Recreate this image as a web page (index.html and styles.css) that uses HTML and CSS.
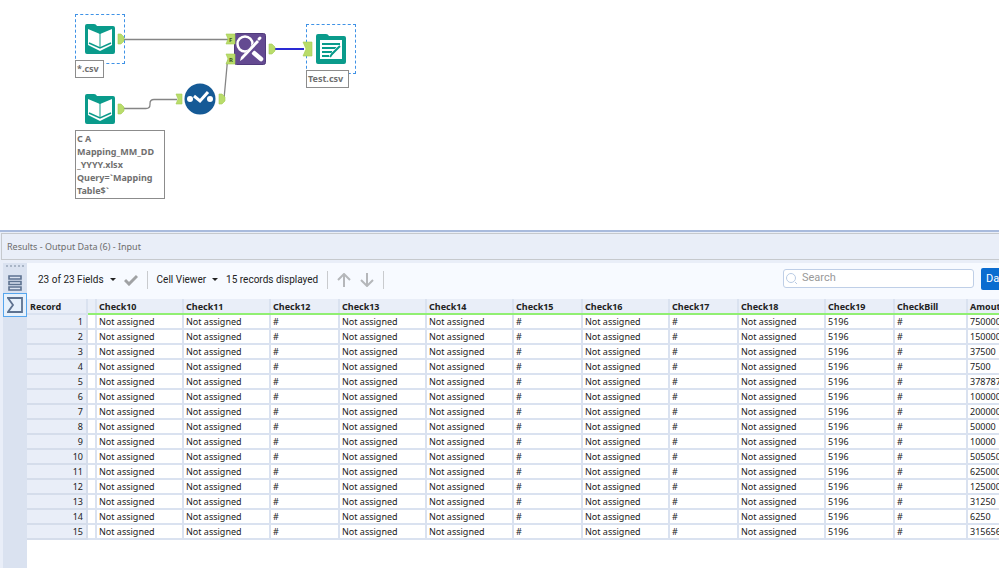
FILE: index.html
```html
<!DOCTYPE html>
<html lang="en">
<head>
    <meta charset="UTF-8">
    <title>Workflow</title>
    <link rel="stylesheet" href="styles.css">
</head>
<body>
    <main class="canvas">
        <svg class="wires" width="400" height="130" viewBox="0 0 400 130">
            <path d="M124 39.5H228"/>
            <path d="M124 108.5h22q4 0 4-4v-1q0-4 4-4h23"/>
            <path d="M224 99L227 66q0-7 4-8"/>
            <path class="wire-selected" d="M274 49H304"/>
        </svg>
        <svg class="ports" width="400" height="130" viewBox="0 0 400 130">
            <path d="M118 34h3l3 3v4l-3 3h-3z"/>
            <path d="M118 104h3l3 3v4l-3 3h-3z"/>
            <path d="M176 94h6v10h-6l2-5z"/>
            <path d="M219 94h3l3 3v4l-3 3h-3z"/>
            <path d="M226 34h9v10h-9l2-5z"/>
            <path d="M226 54h9v10h-9l2-5z"/>
            <path d="M269 44h3l3 3v4l-3 3h-3z"/>
            <path d="M303 42h9v14h-9l3-7z"/>
            <text x="229" y="42">F</text>
            <text x="229" y="62">R</text>
        </svg>

        <div class="node node-input-csv selected">
            <svg width="30" height="30" viewBox="0 0 30 30">
                <path fill="#0a9b8b" d="M2 0h7q2 0 3 2h16q2 0 2 2v24q0 2-2 2H2q-2 0-2-2V2q0-2 2-2z"/>
                <path fill="#fff" d="M3 5l12 5 12-5v16l-12 6-12-6z"/>
                <path fill="none" stroke="#0a9b8b" stroke-width="1" d="M15 9v14"/>
                <path fill="none" stroke="#0a9b8b" stroke-width="1.5" d="M4 19l11 5 11-5"/>
            </svg>
        </div>
        <div class="label label-csv">*.csv</div>

        <div class="node node-input-map">
            <svg width="30" height="30" viewBox="0 0 30 30">
                <path fill="#0a9b8b" d="M2 0h7q2 0 3 2h16q2 0 2 2v24q0 2-2 2H2q-2 0-2-2V2q0-2 2-2z"/>
                <path fill="#fff" d="M3 5l12 5 12-5v16l-12 6-12-6z"/>
                <path fill="none" stroke="#0a9b8b" stroke-width="1" d="M15 9v14"/>
                <path fill="none" stroke="#0a9b8b" stroke-width="1.5" d="M4 19l11 5 11-5"/>
            </svg>
        </div>
        <div class="label label-map">C A<br>Mapping_MM_DD<br>_YYYY.xlsx<br>Query=`Mapping<br>Table$`</div>

        <div class="node node-select">
            <svg width="32" height="32" viewBox="0 0 32 32">
                <circle cx="16" cy="16" r="15.5" fill="#155a96"/>
                <path fill="none" stroke="#fff" stroke-width="3" d="M10 13l6 5 8-9"/>
                <circle cx="6" cy="16" r="3" fill="#fff"/>
                <circle cx="26" cy="16" r="3" fill="#fff"/>
            </svg>
        </div>

        <div class="node node-replace">
            <svg width="32" height="32" viewBox="0 0 32 32">
                <rect x=".5" y=".5" width="31" height="31" rx="2" fill="#644a91" stroke="#503a7b"/>
                <circle cx="11" cy="11" r="7.5" fill="none" stroke="#fff" stroke-width="2.5"/>
                <path stroke="#fff" stroke-width="2" d="M16 17l4 4"/>
                <path stroke="#fff" stroke-width="4.5" stroke-linecap="round" d="M20 20l7 6"/>
                <path stroke="#644a91" stroke-width="5" d="M10 25L25 8"/>
                <path fill="#fff" d="M6 28l1-4L23 7l2 2L9 26z"/>
                <path stroke="#fff" stroke-width="3" stroke-linecap="round" d="M25 6l1-1"/>
            </svg>
        </div>

        <div class="node node-output selected">
            <svg width="30" height="30" viewBox="0 0 30 30">
                <path fill="#0a9b8b" d="M2 0h8q2 0 3 2h15q2 0 2 2v24q0 2-2 2H2q-2 0-2-2V2q0-2 2-2z"/>
                <path fill="#fff" d="M4 6h22v19H4z"/>
                <path stroke="#0a9b8b" stroke-width="2" d="M6 10h18M6 14h15M6 18h10M6 22h7"/>
                <path stroke="#fff" stroke-width="5" d="M15 23l9-10"/>
                <path stroke="#0a9b8b" stroke-width="2" d="M14 23l2-3 8-8"/>
            </svg>
        </div>
        <div class="label label-output">Test.csv</div>
    </main>

    <section class="results">
        <h2 class="results-title">Results - Output Data (6) - Input</h2>
        <div class="results-body">
            <nav class="side">
                <span class="grip"></span>
                <button class="side-btn" type="button" aria-label="Messages">
                    <svg width="14" height="16" viewBox="0 0 14 16">
                        <path fill="none" stroke="#5d7290" stroke-width="1.6" d="M1 1h12v3H1zM1 6.5h12v3H1zM1 12h12v3H1z"/>
                    </svg>
                </button>
                <button class="side-btn active" type="button" aria-label="Output">
                    <svg width="16" height="16" viewBox="0 0 16 16">
                        <path fill="none" stroke="#5d7290" stroke-width="1.8" d="M1 1h14v14H1l5-7z"/>
                    </svg>
                </button>
            </nav>
            <div class="panel">
                <div class="toolbar">
                    <button class="tool" type="button">23 of 23 Fields <i class="caret"></i></button>
                    <button class="tool" type="button" aria-label="Apply">
                        <svg width="14" height="12" viewBox="0 0 14 12"><path fill="none" stroke="#a0a2a4" stroke-width="3" d="M1 6l4 4 8-8"/></svg>
                    </button>
                    <span class="sep"></span>
                    <button class="tool" type="button">Cell Viewer <i class="caret"></i></button>
                    <span>15 records displayed</span>
                    <span class="sep"></span>
                    <button class="tool arrow" type="button" aria-label="Previous">
                        <svg width="14" height="14" viewBox="0 0 14 14"><path fill="none" stroke="#b5b7ba" stroke-width="2" d="M7 14V2M1 7l6-6 6 6"/></svg>
                    </button>
                    <button class="tool arrow" type="button" aria-label="Next">
                        <svg width="14" height="14" viewBox="0 0 14 14"><path fill="none" stroke="#b5b7ba" stroke-width="2" d="M7 0v12M1 7l6 6 6-6"/></svg>
                    </button>
                    <span class="sep"></span>
                    <label class="search">
                        <svg width="12" height="12" viewBox="0 0 12 12"><path fill="none" stroke="#b9cbe4" d="M9 9l2 2"/><circle cx="5" cy="5" r="4.5" fill="none" stroke="#b9cbe4"/></svg>
                        <input type="search" placeholder="Search" aria-label="Search">
                    </label>
                    <button class="data-btn" type="button">Data</button>
                </div>
                <table class="grid">
                    <colgroup>
                        <col class="c-record"><col class="c-gap"><col class="c-wide"><col class="c-wide"><col class="c-slim"><col class="c-wide"><col class="c-wide"><col class="c-slim"><col class="c-wide"><col class="c-slim"><col class="c-wide"><col class="c-slim"><col class="c-bill"><col class="c-wide">
                    </colgroup>
                    <thead>
                        <tr><th>Record</th><th></th><th>Check10</th><th>Check11</th><th>Check12</th><th>Check13</th><th>Check14</th><th>Check15</th><th>Check16</th><th>Check17</th><th>Check18</th><th>Check19</th><th>CheckBill</th><th>Amout</th></tr>
                    </thead>
                    <tbody id="rows"></tbody>
                </table>
            </div>
        </div>
    </section>

    <script>
        const amounts = [750000, 150000, 37500, 7500, 378787, 100000, 200000, 50000, 10000, 505050, 625000, 125000, 31250, 6250, 315656];
        const na = 'Not assigned';

        let html = '';
        amounts.forEach((amount, i) => {
            const cells = ['', na, na, '#', na, na, '#', na, '#', na, 5196, '#', amount];
            html += `<tr><th scope="row">${i + 1}</th>${cells.map(c => `<td>${c}</td>`).join('')}</tr>`;
        });
        document.getElementById('rows').innerHTML = html;
    </script>
</body>
</html>
```
FILE: styles.css
```css
body {
    margin: 0;
    min-height: 100vh;
    display: flex;
    flex-direction: column;
    overflow: hidden;
    background-color: #fff;
    color: #222;
    font-family: "Segoe UI", "Noto Sans", sans-serif;
    font-size: 10px;
}
button {
    padding: 0;
    border: none;
    background: none;
    color: inherit;
    font: inherit;
    cursor: pointer;
}
svg {
    display: block;
}

/* workflow canvas */
.canvas {
    position: relative;
    height: 230px;
}
.wires, .ports {
    position: absolute;
    left: 0;
    top: 0;
}
.wires path {
    fill: none;
    stroke: #858585;
    stroke-width: 1.3;
}
.wires .wire-selected {
    stroke: #2a2ad4;
    stroke-width: 2;
}
.ports {
    z-index: 2;
}
.ports path {
    fill: #b9dc6b;
    stroke: #a2cc50;
    stroke-width: 0.6;
}
.ports text {
    fill: #3d5220;
    font-size: 6px;
    font-weight: bold;
}
.node {
    position: absolute;
    display: flex;
    align-items: center;
    justify-content: center;
    box-sizing: border-box;
    width: 50px;
    height: 50px;
}
.node.selected {
    border: 1px dashed #3f92e6;
}
.node-input-csv { left: 75px; top: 14px; }
.node-input-map { left: 75px; top: 84px; }
.node-select { left: 175px; top: 74px; }
.node-replace { left: 225px; top: 24px; }
.node-output { left: 306px; top: 24px; }
.label {
    position: absolute;
    box-sizing: border-box;
    padding: 1px;
    border: 1px solid #8c8c8c;
    background-color: #fff;
    color: #707070;
    font-size: 9px;
    font-weight: bold;
    line-height: 13px;
}
.label-csv { left: 75px; top: 60px; width: 29px; height: 18px; }
.label-map { left: 75px; top: 130px; width: 90px; height: 69px; }
.label-output { left: 306px; top: 70px; width: 43px; height: 18px; }

/* results window */
.results {
    flex: 1;
    display: flex;
    flex-direction: column;
    border-top: 2px solid #a9bbdd;
    background-color: #e9eef8;
}
.results-title {
    margin: 1px 0 3px 1px;
    padding: 0 5px;
    border: 1px solid #c6c9cd;
    border-right: none;
    background-color: #e9eef8;
    color: #6d6d6d;
    font-size: 9px;
    font-weight: normal;
    line-height: 25px;
}
.results-body {
    flex: 1;
    display: flex;
    padding-left: 3px;
}
.side {
    flex: none;
    width: 24px;
    background-color: #dae2f0;
}
.grip {
    display: block;
    margin: 2px 3px 5px;
    border-top: 2px dotted #a9b5c6;
}
.side-btn {
    display: flex;
    align-items: center;
    justify-content: center;
    box-sizing: border-box;
    width: 24px;
    height: 21px;
}
.side-btn.active {
    height: 24px;
    border: 1px solid #56a6ee;
    background-color: #e6f1fc;
}
.panel {
    flex: 1;
    min-width: 0;
    overflow: hidden;
    background-color: #fff;
}
.toolbar {
    display: flex;
    align-items: center;
    box-sizing: border-box;
    height: 36px;
    padding: 0 0 3px 11px;
    background-color: #f7faff;
    font-family: "Segoe UI", Roboto, sans-serif;
    white-space: nowrap;
}
.tool {
    display: flex;
    align-items: center;
}
.caret {
    margin: 0 8px 0 6px;
    border: 3px solid transparent;
    border-top-color: #222;
    border-bottom: none;
}
.sep {
    flex: none;
    width: 1px;
    height: 18px;
    margin: 0 9px;
    background-color: #c9cbce;
}
.arrow + .arrow {
    margin-left: 9px;
}
.search {
    display: flex;
    align-items: center;
    gap: 4px;
    box-sizing: border-box;
    width: 191px;
    height: 19px;
    margin: 0 7px 2px auto;
    padding: 0 2px;
    border: 1px solid #bfcfe7;
    border-radius: 3px;
    background-color: #fff;
}
.search input {
    flex: 1;
    min-width: 0;
    padding: 0 0 2px;
    border: none;
    outline: none;
    background: none;
    font-family: inherit;
    font-size: 11px;
}
.search input::placeholder {
    color: #999;
}
.data-btn {
    flex: none;
    width: 40px;
    height: 22px;
    margin: 0 -22px 2px 0;
    padding-left: 5px;
    border-radius: 2px;
    background-color: #0a6cd0;
    color: #fff;
    font-size: 11px;
    text-align: left;
}

/* records */
.grid {
    width: 1027px;
    border-collapse: collapse;
    table-layout: fixed;
    font-size: 9px;
}
.c-record { width: 60px; }
.c-gap { width: 9px; }
.c-wide { width: 87px; }
.c-slim { width: 69px; }
.c-bill { width: 73px; }
.grid th, .grid td {
    box-sizing: border-box;
    height: 15px;
    padding: 0 2px;
    border: solid #dae2f0;
    border-width: 0 2px 2px 0;
    line-height: 13px;
    text-align: left;
    white-space: nowrap;
    overflow: hidden;
}
.grid th {
    background-color: #e9eef8;
}
.grid thead th {
    border-bottom: 2px solid #91ef72;
}
.grid thead th:first-child {
    padding-left: 3px;
    border-bottom-color: #dae2f0;
}
.grid tbody th {
    padding-right: 3px;
    border-color: #d5ddeb;
    font-weight: normal;
    text-align: right;
}
```
